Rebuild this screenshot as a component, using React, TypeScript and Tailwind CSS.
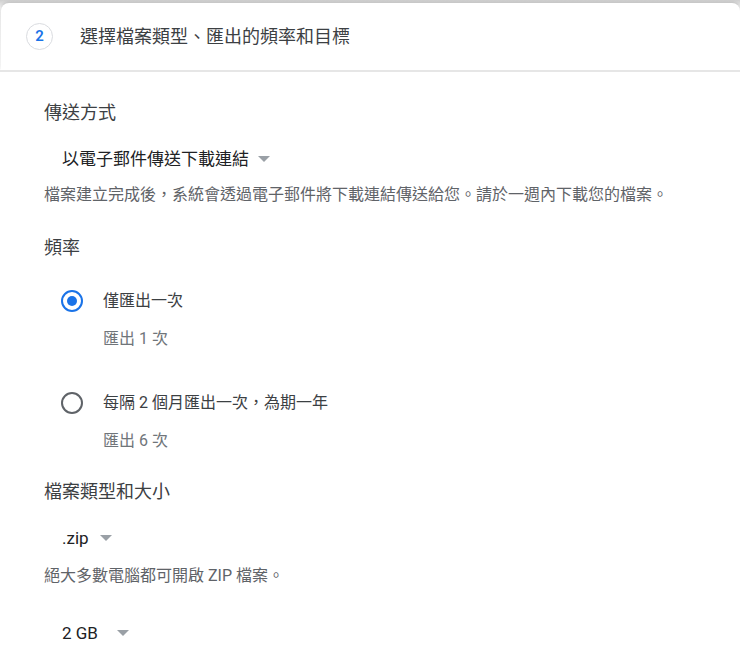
import React from "react";

const FONT = { fontFamily: '"Roboto", "Noto Sans CJK TC", sans-serif' };

function Caret() {
  return (
    <svg width="12" height="6" viewBox="0 0 12 6" className="shrink-0">
      <path d="M0 0h12L6 6z" fill="#9aa0a6" />
    </svg>
  );
}

function Dropdown({ label, gap, className }: { label: string; gap: string; className: string }) {
  return (
    <div className={`flex items-center ml-[18px] ${gap} ${className}`}>
      <span className="text-[17px] leading-6 text-[#202124]">{label}</span>
      <Caret />
    </div>
  );
}

function Radio({ checked, label, sub, className }: { checked: boolean; label: string; sub: string; className: string }) {
  return (
    <div className={className}>
      <div className="flex items-center h-6">
        <span
          className={`ml-[17px] w-[22px] h-[22px] rounded-full border-2 flex items-center justify-center ${
            checked ? "border-[#1a73e8]" : "border-[#5f6368]"
          }`}
        >
          {checked && <span className="w-[10px] h-[10px] rounded-full bg-[#1a73e8]" />}
        </span>
        <span className="ml-5 text-[16px] text-[#3c4043]">{label}</span>
      </div>
      <p className="ml-[59px] mt-[15px] text-[16px] leading-[22px] text-[#70757a]">{sub}</p>
    </div>
  );
}

export default function App() {
  return (
    <div style={FONT} className="w-[740px] h-[661px] overflow-hidden bg-white">
      <div className="bg-gradient-to-b from-[#cfcfcf] via-[#f2f2f2] via-[8px] to-white pt-[3px]">
        <div className="bg-white rounded-t-lg ml-[1px] shadow-[0_-1px_3px_rgba(0,0,0,0.12)]">
          {/* ── Step header ── */}
          <div className="h-[67px] flex items-center pl-[25px]">
            <div className="w-[27px] h-[27px] rounded-full border border-[#dadce0] flex items-center justify-center text-[15px] font-semibold text-[#1a73e8]">
              2
            </div>
            <h2 className="ml-[27px] text-[18px] text-[#3c4043]">選擇檔案類型、匯出的頻率和目標</h2>
          </div>
        </div>
      </div>
      <div className="h-[2px] bg-[#e6e6e6]" />

      {/* ── Body ── */}
      <div className="pl-[44px]">
        <h3 className="mt-[29px] text-[18px] leading-6 text-[#3c4043]">傳送方式</h3>
        <Dropdown label="以電子郵件傳送下載連結" gap="gap-[9px]" className="mt-[22px]" />
        <p className="mt-[13px] text-[16px] leading-[22px] text-[#5f6368]">
          檔案建立完成後，系統會透過電子郵件將下載連結傳送給您。請於一週內下載您的檔案。
        </p>

        <h3 className="mt-[30px] text-[18px] leading-6 text-[#3c4043]">頻率</h3>
        <Radio checked label="僅匯出一次" sub="匯出 1 次" className="mt-[29px]" />
        <Radio checked={false} label="每隔 2 個月匯出一次，為期一年" sub="匯出 6 次" className="mt-[41px]" />

        <h3 className="mt-[28px] text-[18px] leading-6 text-[#3c4043]">檔案類型和大小</h3>
        <Dropdown label=".zip" gap="gap-[11px]" className="mt-[22px]" />
        <p className="mt-[15px] text-[16px] leading-[22px] text-[#5f6368]">絕大多數電腦都可開啟 ZIP 檔案。</p>
        <Dropdown label="2 GB" gap="gap-[19px]" className="mt-[34px]" />
      </div>
    </div>
  );
}
